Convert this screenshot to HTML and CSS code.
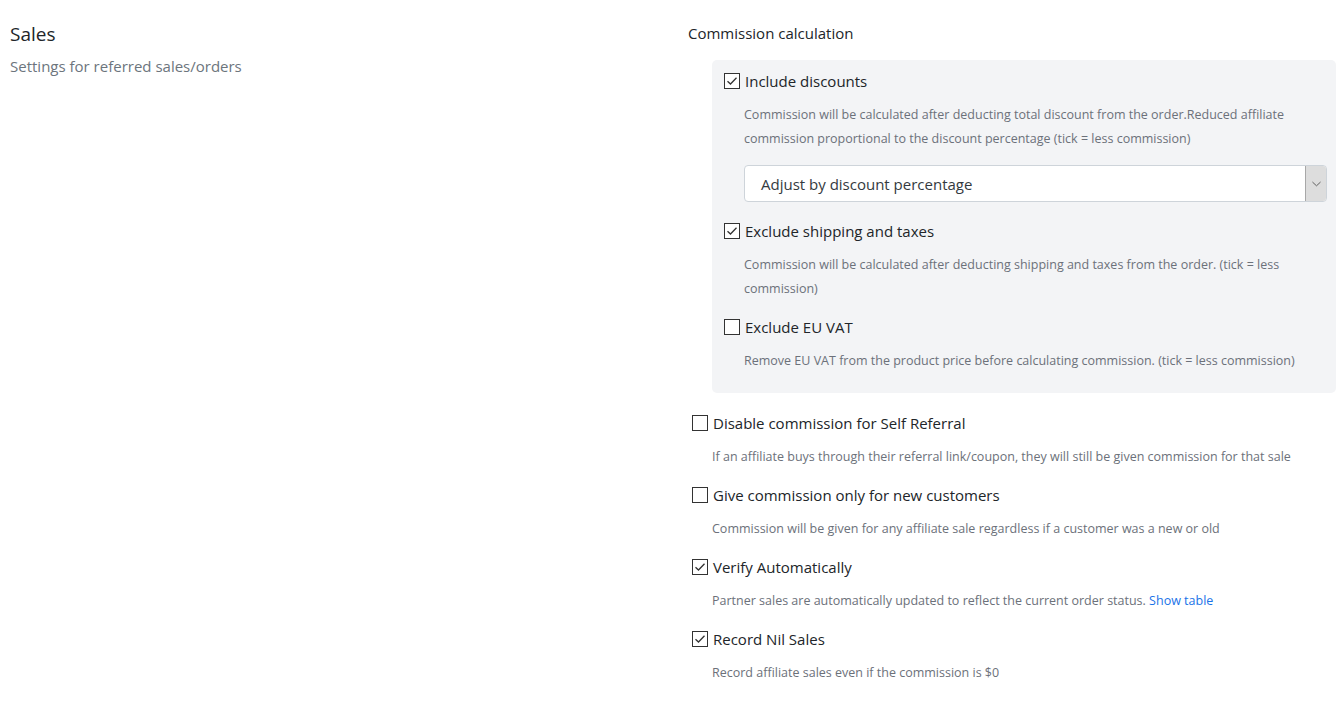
FILE: index.html
```html
<!DOCTYPE html>
<html>
<head>
<meta charset="utf-8">
<link rel="stylesheet" href="styles.css">
</head>
<body>
<div class="page">
  <div class="intro">
    <h2 class="title">Sales</h2>
    <p class="subtitle">Settings for referred sales/orders</p>
  </div>
  <div class="settings">
    <div class="group-title">Commission calculation</div>
    <div class="panel">
      <div class="item">
        <label class="check-row"><span class="box on"><svg viewBox="0 0 16 16" width="16" height="16"><path d="M3.5 8.2 L6.5 11 L12.5 4.8" fill="none" stroke="#333" stroke-width="1.3"/></svg></span><span class="label">Include discounts</span></label>
        <p class="desc">Commission will be calculated after deducting total discount from the order.Reduced affiliate commission proportional to the discount percentage (tick = less commission)</p>
        <div class="select">
          <span class="select-text">Adjust by discount percentage</span>
          <span class="select-btn"><svg viewBox="0 0 10 6" width="9" height="6"><path d="M0.5 0.8 L5 5 L9.5 0.8" fill="none" stroke="#555" stroke-width="1"/></svg></span>
        </div>
      </div>
      <div class="item">
        <label class="check-row"><span class="box on"><svg viewBox="0 0 16 16" width="16" height="16"><path d="M3.5 8.2 L6.5 11 L12.5 4.8" fill="none" stroke="#333" stroke-width="1.3"/></svg></span><span class="label">Exclude shipping and taxes</span></label>
        <p class="desc">Commission will be calculated after deducting shipping and taxes from the order. (tick = less commission)</p>
      </div>
      <div class="item">
        <label class="check-row"><span class="box"></span><span class="label">Exclude EU VAT</span></label>
        <p class="desc">Remove EU VAT from the product price before calculating commission. (tick = less commission)</p>
      </div>
    </div>
    <div class="item outer">
      <label class="check-row"><span class="box"></span><span class="label">Disable commission for Self Referral</span></label>
      <p class="desc">If an affiliate buys through their referral link/coupon, they will still be given commission for that sale</p>
    </div>
    <div class="item outer">
      <label class="check-row"><span class="box"></span><span class="label">Give commission only for new customers</span></label>
      <p class="desc">Commission will be given for any affiliate sale regardless if a customer was a new or old</p>
    </div>
    <div class="item outer">
      <label class="check-row"><span class="box on"><svg viewBox="0 0 16 16" width="16" height="16"><path d="M3.5 8.2 L6.5 11 L12.5 4.8" fill="none" stroke="#333" stroke-width="1.3"/></svg></span><span class="label">Verify Automatically</span></label>
      <p class="desc">Partner sales are automatically updated to reflect the current order status. <a class="link" href="#">Show table</a></p>
    </div>
    <div class="item outer">
      <label class="check-row"><span class="box on"><svg viewBox="0 0 16 16" width="16" height="16"><path d="M3.5 8.2 L6.5 11 L12.5 4.8" fill="none" stroke="#333" stroke-width="1.3"/></svg></span><span class="label">Record Nil Sales</span></label>
      <p class="desc">Record affiliate sales even if the commission is $0</p>
    </div>
  </div>
</div>
</body>
</html>
```
FILE: styles.css
```css
* { box-sizing: border-box; }
html, body { margin: 0; padding: 0; background: #fff; }
body {
  font-family: "Open Sans", "Noto Sans", sans-serif;
  color: #212529;
}
.page {
  display: grid;
  grid-template-columns: 1fr 648px;
  padding: 22px 6px 0 10px;
}
.title {
  margin: 0;
  font-size: 19px;
  font-weight: 400;
  line-height: 24px;
  color: #212529;
}
.subtitle {
  margin: 8px 0 0;
  font-size: 15px;
  line-height: 24px;
  color: #6c757d;
}
.group-title {
  font-size: 15px;
  line-height: 22px;
  margin-bottom: 16px;
}
.panel {
  margin-left: 24px;
  background: #f3f4f6;
  border-radius: 5px;
  padding: 9px 9px 6px 12px;
  margin-bottom: 18px;
}
.item { margin-bottom: 14px; }
.outer { margin-left: 4px; }
.check-row {
  display: flex;
  align-items: center;
  height: 24px;
}
.box {
  width: 16px;
  height: 16px;
  border: 1px solid #333;
  background: #fff;
  margin-right: 5px;
  position: relative;
  flex: none;
}
.box svg { position: absolute; left: -1px; top: -1px; }
.label {
  font-size: 15px;
  color: #212529;
}
.desc {
  margin: 10px 0 0 20px;
  font-size: 12.5px;
  line-height: 24px;
  color: #6c717a;
}
.link { color: #1a73e8; text-decoration: none; }
.select {
  margin: 14px 0 17px 20px;
  height: 37px;
  display: flex;
  align-items: stretch;
  background: #fff;
  border: 1px solid #ced4da;
  border-radius: 4px;
}
.select-text {
  flex: 1;
  display: flex;
  align-items: center;
  padding-left: 16px;
  font-size: 15px;
  color: #343a40;
}
.select-btn {
  width: 21px;
  display: flex;
  align-items: center;
  justify-content: center;
  background: #dddddd;
  border-left: 1px solid #a8a8a8;
  border-radius: 0 3px 3px 0;
}
.panel .item:first-child { margin-bottom: 0; }
.panel .item:last-child { margin-bottom: 14px; }
```
